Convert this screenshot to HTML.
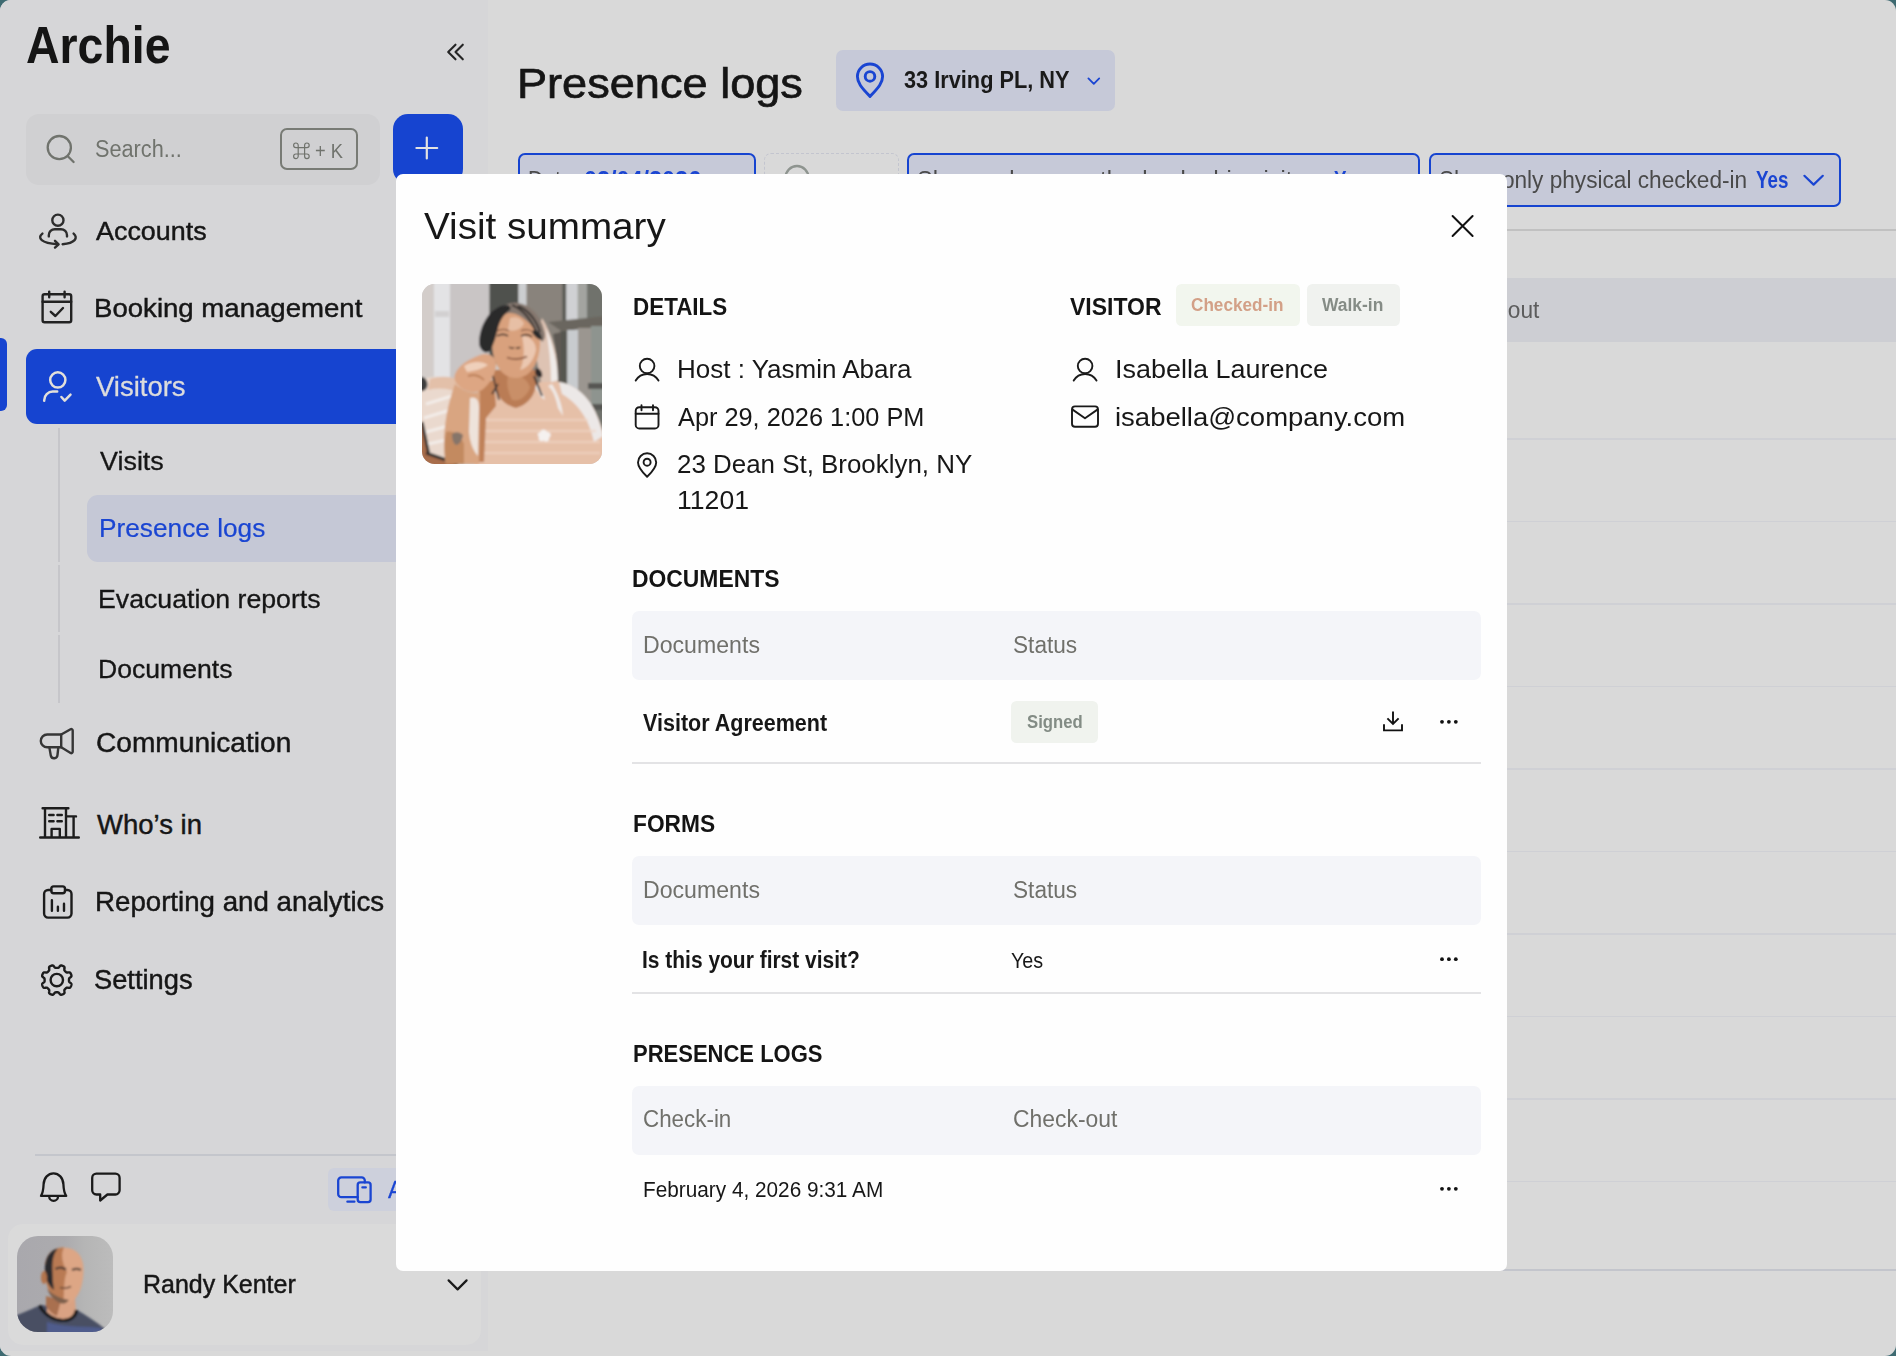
<!DOCTYPE html>
<html lang="en">
<head>
<meta charset="utf-8">
<title>Archie - Presence logs</title>
<style>
html,body{margin:0;padding:0}
body{width:1896px;height:1356px;overflow:hidden;position:relative;background:#3e6a71;font-family:"Liberation Sans",sans-serif}
.b{position:absolute;box-sizing:border-box}
.t{position:absolute;white-space:nowrap;line-height:1;font-family:"Liberation Sans",sans-serif;transform-origin:0 0}
svg.ov{position:absolute;left:0;top:0;width:1896px;height:1356px;overflow:visible}
#win{left:0;top:0;width:1896px;height:1356px;background:#d9d9d9;border-radius:11px;overflow:hidden}
#sidebar{left:0;top:0;width:487.5px;height:1351px;background:#d6d6d8}
#modal{left:396px;top:174px;width:1111px;height:1097px;background:#fefefe;border-radius:7px}
.blue{background:#1644d0}
.chip{background:#c6c9d8;border:2px solid #1644d0;border-radius:7px;top:153px;height:54px}
.th{background:#f4f5f9;border-radius:7px;left:632px;width:849px}
.sep{left:632px;width:849px;height:2px;background:#e3e3e5}
.rl{left:518px;width:1378px;height:1.5px;background:#cfd0d5}
.vl{left:58.4px;width:1.4px;background:#c6c6ca}
.badge{border-radius:5.5px}
</style>
</head>
<body>
<!-- ================= page behind the dialog ================= -->
<div class="b" id="win">
<div class="b" id="sidebar"></div>

<!-- sidebar boxes -->
<div class="b" style="left:26px;top:114px;width:353.5px;height:70.5px;border-radius:13px;background:#d0d0d2"></div>
<div class="b" style="left:280px;top:127.5px;width:78px;height:42.5px;border-radius:7px;border:2.2px solid #787b75"></div>
<div class="b blue" style="left:393px;top:114px;width:69.5px;height:70px;border-radius:15px"></div>
<div class="b blue" style="left:0;top:337.5px;width:6.6px;height:73.5px;border-radius:0 6px 6px 0"></div>
<div class="b blue" style="left:26px;top:348.5px;width:440px;height:75.5px;border-radius:11px"></div>
<div class="b vl" style="top:428px;height:133.5px"></div>
<div class="b vl" style="top:565px;height:66.5px"></div>
<div class="b vl" style="top:635px;height:68px"></div>
<div class="b" style="left:87px;top:495px;width:380px;height:66.5px;border-radius:11px;background:#c5c8d6"></div>
<div class="b" style="left:35px;top:1154.3px;width:445px;height:1.5px;background:#c4c6cc"></div>
<div class="b" style="left:327.5px;top:1168px;width:140px;height:43px;border-radius:6px;background:#cdd0dc"></div>
<div class="b" style="left:7.5px;top:1224px;width:473.5px;height:120.5px;border-radius:15px;background:#dadada"></div>

<!-- main page boxes -->
<div class="b" style="left:836px;top:49.5px;width:279px;height:61px;border-radius:7px;background:#c6c9d8"></div>
<div class="b chip" style="left:518px;width:238px"></div>
<div class="b" style="left:764px;top:153px;width:135px;height:54px;border-radius:7px;border:1.5px dashed #c3c5cf"></div>
<div class="b chip" style="left:906.5px;width:513.5px"></div>
<div class="b chip" style="left:1429px;width:412px"></div>
<div class="b" style="left:518px;top:229px;width:1378px;height:2px;background:#c1c1c1"></div>
<div class="b" style="left:518px;top:278px;width:1378px;height:63.5px;background:#cdced3"></div>
<div class="b rl" style="top:438.3px"></div>
<div class="b rl" style="top:520.8px"></div>
<div class="b rl" style="top:603.3px"></div>
<div class="b rl" style="top:685.8px"></div>
<div class="b rl" style="top:768.3px"></div>
<div class="b rl" style="top:850.8px"></div>
<div class="b rl" style="top:933.3px"></div>
<div class="b rl" style="top:1015.8px"></div>
<div class="b rl" style="top:1098.3px"></div>
<div class="b rl" style="top:1180.8px"></div>
<div class="b rl" style="top:1268.8px;height:2px;background:#c3c5cc"></div>

<svg class="b" style="left:16.5px;top:1235.8px;width:96px;height:96px" viewBox="0 0 96 96">
<defs>
<clipPath id="avc"><rect x="0" y="0" width="96" height="96" rx="21"/></clipPath>
<filter id="avb" x="-5%" y="-5%" width="110%" height="110%"><feGaussianBlur stdDeviation="0.9"/></filter>
<linearGradient id="avbg" x1="0" x2="1" y1="0" y2="0"><stop offset="0" stop-color="#a9a8ad"/><stop offset="0.5" stop-color="#acabae"/><stop offset="0.7" stop-color="#b5b5b5"/><stop offset="1" stop-color="#bcbcbc"/></linearGradient>
</defs>
<g clip-path="url(#avc)">
<rect width="96" height="96" fill="url(#avbg)"/>
<g filter="url(#avb)">
<!-- shirt -->
<path d="M-2 80 C8 76 16 72 24 69 L60 74 C70 80 80 86 88 93 L88 98 L-2 98 Z" fill="#4a4f63"/>
<path d="M30 86 C50 92 70 90 84 92 L88 98 L30 98 Z" fill="#4f5c8c"/>
<!-- neck -->
<path d="M30 62 L58 62 L59 76 C52 86 40 86 30 76 Z" fill="#d9a283"/>
<path d="M29 60 L44 64 L40 80 C35 78 31 74 29 70 Z" fill="#a9704f"/>
<!-- collar -->
<path d="M22.500 69.500 C28 80 38 84.500 46 84.500 C54 84.500 59 80 59.500 74" fill="none" stroke="#141414" stroke-width="3.200"/>
<!-- head -->
<path d="M28 32 C28 18 37 11.500 47 11.500 C59 11.500 66.500 20 66.500 33 C66.500 48 63 58 56 65 C52 68.500 45 68.500 40 65 C32 59 28 48 28 32 Z" fill="#dda685"/>
<!-- shadow side of face -->
<path d="M28 32 C28 18 37 11.500 47 11.500 C43 20 46 28 50 36 C46 44 48 56 46 67 C43 67.500 41 66 40 65 C32 59 28 48 28 32 Z" fill="#b97a53"/>
<!-- jaw / beard shadow -->
<path d="M30 52 C34 58 42 62 52 64 C49 68.500 44 68.500 40 65.500 C35 62 32 58 30 52 Z" fill="#7d5e4c"/>
<!-- hair dark strip -->
<path d="M28 36 C27 22 33 14 41 12.500 C36 18 35 26 35.500 36 C35.500 42 36 48 37 54 C32 50 28.500 44 28 36 Z" fill="#2b2b2e"/>
<!-- ear -->
<ellipse cx="27" cy="41.500" rx="3" ry="6.500" fill="#b3744e"/>
<!-- eyes / brows -->
<path d="M38.500 33 C42 31 46 31.500 49 33.500" stroke="#4a3a34" stroke-width="2.200" fill="none"/>
<path d="M55 34 C58 32.500 61 32.500 64 34" stroke="#5a463c" stroke-width="2" fill="none"/>
<path d="M43 51.500 C46 52.500 50 52.500 54 50.500" stroke="#6a4a3a" stroke-width="1.500" fill="none"/>
</g>
</g>
</svg>

<!-- background text -->
<span class="t" style="left:26.01px;top:19.30px;font-size:52px;color:#151515;font-weight:bold;transform:scaleX(0.8925);">Archie</span>
<span class="t" style="left:95.06px;top:137.65px;font-size:23px;color:#70736d;transform:scaleX(0.9438);">Search...</span>
<span class="t" style="left:315.09px;top:141.40px;font-size:20px;color:#70736d;transform:scaleX(0.9138);">+ K</span>
<span class="t" style="left:95.80px;top:217.78px;font-size:26.5px;color:#161616;-webkit-text-stroke:0.45px #161616;transform:scaleX(1.0148);">Accounts</span>
<span class="t" style="left:93.92px;top:295.38px;font-size:26.5px;color:#161616;-webkit-text-stroke:0.45px #161616;transform:scaleX(1.0410);">Booking management</span>
<span class="t" style="left:95.80px;top:373.62px;font-size:26.8px;color:#dcdcdc;-webkit-text-stroke:0.3px #dcdcdc;transform:scaleX(1.0253);">Visitors</span>
<span class="t" style="left:100.00px;top:449.15px;font-size:25px;color:#161616;-webkit-text-stroke:0.3px #161616;transform:scaleX(1.0763);">Visits</span>
<span class="t" style="left:98.50px;top:516.45px;font-size:25px;color:#1a45d2;-webkit-text-stroke:0.2px #1a45d2;transform:scaleX(1.0500);">Presence logs</span>
<span class="t" style="left:98.46px;top:587.25px;font-size:25px;color:#161616;-webkit-text-stroke:0.3px #161616;transform:scaleX(1.0680);">Evacuation reports</span>
<span class="t" style="left:98.47px;top:657.25px;font-size:25px;color:#161616;-webkit-text-stroke:0.3px #161616;transform:scaleX(1.0637);">Documents</span>
<span class="t" style="left:95.86px;top:730.45px;font-size:27px;color:#161616;-webkit-text-stroke:0.45px #161616;transform:scaleX(1.0411);">Communication</span>
<span class="t" style="left:97.00px;top:810.52px;font-size:27.5px;color:#161616;-webkit-text-stroke:0.45px #161616;transform:scaleX(1.0000);">Who’s in</span>
<span class="t" style="left:95.07px;top:887.99px;font-size:27.3px;color:#161616;-webkit-text-stroke:0.45px #161616;transform:scaleX(1.0138);">Reporting and analytics</span>
<span class="t" style="left:94.31px;top:966.02px;font-size:27.5px;color:#161616;-webkit-text-stroke:0.45px #161616;transform:scaleX(0.9918);">Settings</span>
<span class="t" style="left:388.00px;top:1178.00px;font-size:24px;color:#1a45d2;-webkit-text-stroke:0.3px #1a45d2;transform:scaleX(0.9552);">Admin</span>
<span class="t" style="left:142.75px;top:1271.95px;font-size:25px;color:#161616;-webkit-text-stroke:0.45px #161616;transform:scaleX(0.9990);">Randy Kenter</span>
<span class="t" style="left:517.35px;top:61.95px;font-size:43px;color:#151515;-webkit-text-stroke:0.7px #151515;transform:scaleX(1.0493);">Presence logs</span>
<span class="t" style="left:903.85px;top:68.85px;font-size:23px;color:#1a1a1a;font-weight:bold;transform:scaleX(0.9454);">33 Irving PL, NY</span>
<span class="t" style="left:528.16px;top:169.35px;font-size:23px;color:#4a4a4a;transform:scaleX(0.9216);">Date:</span>
<span class="t" style="left:583.98px;top:169.35px;font-size:23px;color:#1a45d2;font-weight:bold;transform:scaleX(1.0177);">02/04/2026</span>
<span class="t" style="left:916.97px;top:169.35px;font-size:23px;color:#4a4a4a;transform:scaleX(1.0304);">Show only currently checked-in visitors</span>
<span class="t" style="left:1334.18px;top:169.35px;font-size:23px;color:#1a45d2;font-weight:bold;transform:scaleX(0.8158);">Yes</span>
<span class="t" style="left:1439.02px;top:169.35px;font-size:23px;color:#4a4a4a;transform:scaleX(0.9839);">Show only physical checked-in</span>
<span class="t" style="left:1756.18px;top:169.35px;font-size:23px;color:#1a45d2;font-weight:bold;transform:scaleX(0.8158);">Yes</span>
<span class="t" style="left:1436.01px;top:299.45px;font-size:23px;color:#5c5c5c;transform:scaleX(0.9865);">Check-out</span>

<!-- background icons -->
<svg class="ov" viewBox="0 0 1896 1356" fill="none" stroke-linecap="round" stroke-linejoin="round">
<!-- collapse chevrons -->
<g stroke="#252525" stroke-width="2.1">
<path d="M455.5 44.7 L448.2 52 L455.5 59.3"/><path d="M462.8 44.7 L455.5 52 L462.8 59.3"/>
</g>
<!-- search icon -->
<g stroke="#70736d" stroke-width="2.3">
<circle cx="59.3" cy="147.6" r="11.6"/><path d="M67.8 156.2 L73.6 162"/>
</g>
<!-- command key glyph -->
<g stroke="#70736d" stroke-width="1.2" stroke-linecap="butt">
<path d="M298.200 147.600 h6.400 v6.400 h-6.400 z"/>
<path d="M298.200 147.600 h-2.300 a2.300 2.300 0 1 1 2.300 -2.300 z M304.600 147.600 v-2.300 a2.300 2.300 0 1 1 2.300 2.300 z M304.600 154 h2.300 a2.300 2.300 0 1 1 -2.300 2.300 z M298.200 154 v2.300 a2.300 2.300 0 1 1 -2.300 -2.300 z"/>
</g>
<!-- plus -->
<g stroke="#e2e2e2" stroke-width="2.2"><path d="M416.4 148 h20.8 M426.8 137.6 v20.8"/></g>
<!-- accounts -->
<g stroke="#2d2d2d" stroke-width="2.4">
<circle cx="57.9" cy="220.2" r="5.6"/>
<path d="M48.8 236.4 v-1.2 a6 6 0 0 1 6 -6 h6.2 a6 6 0 0 1 6 6 v1.2"/>
<path d="M42.4 233.6 C37 238 41 243.2 57.6 244.3"/>
<path d="M73.6 233.6 C78.5 238 75 243 62.6 244.2"/>
<path d="M55 240.8 L58.6 244.3 L55 247.6"/>
</g>
<!-- booking -->
<g stroke="#222" stroke-width="2.4">
<rect x="42.6" y="294.3" width="28.6" height="28" rx="2"/>
<path d="M42.6 301.8 h28.6 M49.2 291.6 v5.6 M64.6 291.6 v5.6"/>
<path d="M50.8 311.8 L55.4 316 L63 308"/>
</g>
<!-- visitors (active) -->
<g stroke="#e3e0da" stroke-width="2.5">
<circle cx="57.8" cy="379.9" r="7.6"/>
<path d="M44.2 400.8 v-0.6 a8.6 8.6 0 0 1 8.6 -8.6 h4.4"/>
<path d="M61.4 397 L64.7 400.6 L70.5 394.6"/>
</g>
<!-- communication -->
<g stroke="#363636" stroke-width="2.4">
<path d="M61.2 734.5 h-14 a6.4 6.4 0 0 0 0 12.8 h14 z"/>
<path d="M61.2 734.5 L70.6 729.2 a1.4 1.4 0 0 1 2.1 1.2 v21.4 a1.4 1.4 0 0 1 -2.1 1.2 L61.2 747.3"/>
<path d="M49.4 747.6 l1.4 8 a3.4 3.4 0 0 0 6.7 -0.6 l0.8 -7.4"/>
</g>
<!-- who's in -->
<g stroke="#1c1c1c" stroke-width="2.4" stroke-linecap="butt">
<path d="M42.6 808.3 h25.8 M45 808.3 v29.2 M66 808.3 v29.2 M66 816.4 h10 M73.6 816.4 v21 M40.2 837.5 h38.6" stroke-linecap="round"/>
<path d="M49.2 815 h4.4 M57.4 815 h4.4 M49.2 821.3 h4.4 M57.4 821.3 h4.4" stroke-linecap="round"/>
<path d="M51.6 837.5 v-8.6 h8.2 v8.6"/>
</g>
<!-- reporting -->
<g stroke="#1c1c1c" stroke-width="2.4">
<path d="M51.3 890 h-3.2 a4 4 0 0 0 -4 4 v19.6 a4 4 0 0 0 4 4 h19.4 a4 4 0 0 0 4 -4 v-19.6 a4 4 0 0 0 -4 -4 h-2.5"/>
<rect x="51.3" y="886.4" width="13.7" height="6.8" rx="2.4"/>
<path d="M51.9 900.2 v10.6 M57.9 906.8 v4 M64 903.8 v7"/>
</g>
<!-- settings gear -->
<g stroke="#1c1c1c" stroke-width="2.4">
<circle cx="56.8" cy="980.1" r="6.2"/>
<path d="M71.03 985.99 L70.92 986.24 L70.81 986.48 L70.68 986.72 L70.55 986.95 L70.40 987.18 L70.22 987.39 L70.01 987.58 L69.74 987.73 L69.39 987.82 L68.94 987.84 L68.41 987.79 L67.87 987.71 L67.38 987.65 L67.00 987.65 L66.71 987.70 L66.48 987.80 L66.29 987.92 L66.12 988.06 L65.96 988.20 L65.80 988.35 L65.65 988.50 L65.50 988.65 L65.35 988.80 L65.20 988.95 L65.05 989.10 L64.90 989.26 L64.76 989.42 L64.62 989.59 L64.50 989.78 L64.40 990.01 L64.35 990.30 L64.35 990.68 L64.41 991.17 L64.49 991.71 L64.54 992.24 L64.52 992.69 L64.43 993.04 L64.28 993.31 L64.09 993.52 L63.88 993.70 L63.65 993.85 L63.42 993.98 L63.18 994.11 L62.94 994.22 L62.69 994.33 L62.44 994.43 L62.19 994.52 L61.93 994.60 L61.67 994.67 L61.41 994.72 L61.14 994.75 L60.86 994.73 L60.56 994.65 L60.25 994.46 L59.92 994.16 L59.58 993.75 L59.25 993.30 L58.95 992.92 L58.68 992.65 L58.43 992.48 L58.20 992.39 L57.98 992.34 L57.76 992.31 L57.55 992.30 L57.33 992.30 L57.12 992.30 L56.91 992.30 L56.69 992.30 L56.48 992.30 L56.27 992.30 L56.05 992.30 L55.84 992.31 L55.62 992.34 L55.40 992.39 L55.17 992.48 L54.92 992.65 L54.65 992.92 L54.35 993.30 L54.02 993.75 L53.68 994.16 L53.35 994.46 L53.04 994.65 L52.74 994.73 L52.46 994.75 L52.19 994.72 L51.93 994.67 L51.67 994.60 L51.41 994.52 L51.16 994.43 L50.91 994.33 L50.66 994.22 L50.42 994.11 L50.18 993.98 L49.95 993.85 L49.72 993.70 L49.51 993.52 L49.32 993.31 L49.17 993.04 L49.08 992.69 L49.06 992.24 L49.11 991.71 L49.19 991.17 L49.25 990.68 L49.25 990.30 L49.20 990.01 L49.10 989.78 L48.98 989.59 L48.84 989.42 L48.70 989.26 L48.55 989.10 L48.40 988.95 L48.25 988.80 L48.10 988.65 L47.95 988.50 L47.80 988.35 L47.64 988.20 L47.48 988.06 L47.31 987.92 L47.12 987.80 L46.89 987.70 L46.60 987.65 L46.22 987.65 L45.73 987.71 L45.19 987.79 L44.66 987.84 L44.21 987.82 L43.86 987.73 L43.59 987.58 L43.38 987.39 L43.20 987.18 L43.05 986.95 L42.92 986.72 L42.79 986.48 L42.68 986.24 L42.57 985.99 L42.47 985.74 L42.38 985.49 L42.30 985.23 L42.23 984.97 L42.18 984.71 L42.15 984.44 L42.17 984.16 L42.25 983.86 L42.44 983.55 L42.74 983.22 L43.15 982.88 L43.60 982.55 L43.98 982.25 L44.25 981.98 L44.42 981.73 L44.51 981.50 L44.56 981.28 L44.59 981.06 L44.60 980.85 L44.60 980.63 L44.60 980.42 L44.60 980.21 L44.60 979.99 L44.60 979.78 L44.60 979.57 L44.60 979.35 L44.59 979.14 L44.56 978.92 L44.51 978.70 L44.42 978.47 L44.25 978.22 L43.98 977.95 L43.60 977.65 L43.15 977.32 L42.74 976.98 L42.44 976.65 L42.25 976.34 L42.17 976.04 L42.15 975.76 L42.18 975.49 L42.23 975.23 L42.30 974.97 L42.38 974.71 L42.47 974.46 L42.57 974.21 L42.68 973.96 L42.79 973.72 L42.92 973.48 L43.05 973.25 L43.20 973.02 L43.38 972.81 L43.59 972.62 L43.86 972.47 L44.21 972.38 L44.66 972.36 L45.19 972.41 L45.73 972.49 L46.22 972.55 L46.60 972.55 L46.89 972.50 L47.12 972.40 L47.31 972.28 L47.48 972.14 L47.64 972.00 L47.80 971.85 L47.95 971.70 L48.10 971.55 L48.25 971.40 L48.40 971.25 L48.55 971.10 L48.70 970.94 L48.84 970.78 L48.98 970.61 L49.10 970.42 L49.20 970.19 L49.25 969.90 L49.25 969.52 L49.19 969.03 L49.11 968.49 L49.06 967.96 L49.08 967.51 L49.17 967.16 L49.32 966.89 L49.51 966.68 L49.72 966.50 L49.95 966.35 L50.18 966.22 L50.42 966.09 L50.66 965.98 L50.91 965.87 L51.16 965.77 L51.41 965.68 L51.67 965.60 L51.93 965.53 L52.19 965.48 L52.46 965.45 L52.74 965.47 L53.04 965.55 L53.35 965.74 L53.68 966.04 L54.02 966.45 L54.35 966.90 L54.65 967.28 L54.92 967.55 L55.17 967.72 L55.40 967.81 L55.62 967.86 L55.84 967.89 L56.05 967.90 L56.27 967.90 L56.48 967.90 L56.69 967.90 L56.91 967.90 L57.12 967.90 L57.33 967.90 L57.55 967.90 L57.76 967.89 L57.98 967.86 L58.20 967.81 L58.43 967.72 L58.68 967.55 L58.95 967.28 L59.25 966.90 L59.58 966.45 L59.92 966.04 L60.25 965.74 L60.56 965.55 L60.86 965.47 L61.14 965.45 L61.41 965.48 L61.67 965.53 L61.93 965.60 L62.19 965.68 L62.44 965.77 L62.69 965.87 L62.94 965.98 L63.18 966.09 L63.42 966.22 L63.65 966.35 L63.88 966.50 L64.09 966.68 L64.28 966.89 L64.43 967.16 L64.52 967.51 L64.54 967.96 L64.49 968.49 L64.41 969.03 L64.35 969.52 L64.35 969.90 L64.40 970.19 L64.50 970.42 L64.62 970.61 L64.76 970.78 L64.90 970.94 L65.05 971.10 L65.20 971.25 L65.35 971.40 L65.50 971.55 L65.65 971.70 L65.80 971.85 L65.96 972.00 L66.12 972.14 L66.29 972.28 L66.48 972.40 L66.71 972.50 L67.00 972.55 L67.38 972.55 L67.87 972.49 L68.41 972.41 L68.94 972.36 L69.39 972.38 L69.74 972.47 L70.01 972.62 L70.22 972.81 L70.40 973.02 L70.55 973.25 L70.68 973.48 L70.81 973.72 L70.92 973.96 L71.03 974.21 L71.13 974.46 L71.22 974.71 L71.30 974.97 L71.37 975.23 L71.42 975.49 L71.45 975.76 L71.43 976.04 L71.35 976.34 L71.16 976.65 L70.86 976.98 L70.45 977.32 L70.00 977.65 L69.62 977.95 L69.35 978.22 L69.18 978.47 L69.09 978.70 L69.04 978.92 L69.01 979.14 L69.00 979.35 L69.00 979.57 L69.00 979.78 L69.00 979.99 L69.00 980.21 L69.00 980.42 L69.00 980.63 L69.00 980.85 L69.01 981.06 L69.04 981.28 L69.09 981.50 L69.18 981.73 L69.35 981.98 L69.62 982.25 L70.00 982.55 L70.45 982.88 L70.86 983.22 L71.16 983.55 L71.35 983.86 L71.43 984.16 L71.45 984.44 L71.42 984.71 L71.37 984.97 L71.30 985.23 L71.22 985.49 L71.13 985.74 L71.03 985.99 Z"/>
</g>
<!-- bell -->
<g stroke="#1a1a1a" stroke-width="2.3">
<path d="M41 1195.9 h25.2 c-2.2 -3 -2.6 -7 -2.8 -11.6 c-0.3 -6.6 -4.6 -10.9 -9.9 -10.9 s-9.6 4.3 -9.9 10.9 c-0.2 4.6 -0.6 8.600 -2.600 11.6 z"/>
<path d="M49.2 1196.4 a4.4 4.4 0 0 0 8.800 0"/>
</g>
<!-- chat -->
<g stroke="#1a1a1a" stroke-width="2.3">
<path d="M96.400 1173.700 h19 a4.200 4.200 0 0 1 4.200 4.200 v12.400 a4.200 4.200 0 0 1 -4.200 4.200 h-8 l-7.200 6 v-6 h-3.800 a4.200 4.200 0 0 1 -4.200 -4.200 v-12.400 a4.200 4.200 0 0 1 4.200 -4.200 z"/>
</g>
<!-- devices -->
<g stroke="#1a45d2" stroke-width="2.3">
<path d="M357.7 1197.200 h-16.300 a3.200 3.200 0 0 1 -3.200 -3.200 v-13.400 a3.200 3.200 0 0 1 3.200 -3.200 h20.200 a3.200 3.200 0 0 1 3.200 3.200 v1.800"/>
<rect x="357.7" y="1182.4" width="12.9" height="19.8" rx="2.6"/>
<path d="M347.4 1201.700 h7 M362.400 1187.400 h3.400"/>
</g>
<!-- chevron (user card) -->
<g stroke="#1a1a1a" stroke-width="2.2"><path d="M448.6 1280.400 L457.600 1289.400 L466.600 1280.400"/></g>
<!-- header pin -->
<g stroke="#1a45d2" stroke-width="2.9">
<path d="M870 96.400 C861 87.400 857.400 82.400 857.400 76.600 a12.600 12.600 0 0 1 25.200 0 c0 5.800 -3.600 10.800 -12.600 19.800 z"/>
<circle cx="870" cy="76.400" r="4.800"/>
</g>
<g stroke="#1a45d2" stroke-width="1.800"><path d="M1088.400 78.400 L1093.800 83.800 L1099.200 78.400"/></g>
<!-- dashed chip search icon -->
<g stroke="#8e948f" stroke-width="2.3"><circle cx="797" cy="177.400" r="11.400"/></g>
<!-- chip 4 chevron -->
<g stroke="#1a45d2" stroke-width="2.2"><path d="M1804.400 175.800 L1813.600 184.600 L1822.800 175.800"/></g>

</svg>

<!-- ================= Visit summary dialog ================= -->
<div class="b" id="modal"></div>
<div class="b th" style="top:611px;height:68.5px"></div>
<div class="b sep" style="top:762px"></div>
<div class="b th" style="top:856px;height:68.5px"></div>
<div class="b sep" style="top:992px"></div>
<div class="b th" style="top:1086px;height:68.5px"></div>
<div class="b badge" style="left:1176px;top:284px;width:123.5px;height:41.5px;background:#f2f6ee"></div>
<div class="b badge" style="left:1307px;top:284px;width:93px;height:41.5px;background:#f0f2ef"></div>
<div class="b badge" style="left:1011px;top:701px;width:87px;height:42px;background:#f0f3ee"></div>

<svg class="b" style="left:422px;top:283.500px;width:180px;height:180px" viewBox="0 0 180 180">
<defs>
<clipPath id="phc"><rect x="0" y="0" width="180" height="180" rx="12.500"/></clipPath>
<filter id="phb" x="-5%" y="-5%" width="110%" height="110%"><feGaussianBlur stdDeviation="1.100"/></filter>
</defs>
<g clip-path="url(#phc)">
<rect width="180" height="180" fill="#cfcbca"/>
<g filter="url(#phb)">
<!-- wall -->
<rect x="-4" y="-4" width="16" height="104" fill="#d3cdca"/>
<rect x="12" y="-4" width="16" height="104" fill="#e3e3e5"/>
<rect x="13" y="27" width="14" height="6" fill="#d2d0d1"/>
<rect x="28" y="-4" width="39.500" height="104" fill="#c9c5c5"/>
<!-- window region -->
<rect x="67.400" y="-4" width="29" height="84" fill="#4f514d"/>
<rect x="96.800" y="-4" width="8" height="40" fill="#ccced0"/>
<rect x="104.500" y="-4" width="37" height="112" fill="#89837c"/>
<rect x="140.500" y="-4" width="4" height="112" fill="#595853"/>
<rect x="144.300" y="-4" width="11.500" height="112" fill="#d0d1d4"/>
<rect x="155.700" y="-4" width="9.500" height="150" fill="#a3a4a0"/>
<rect x="165" y="-4" width="19" height="150" fill="#70726c"/>
<path d="M126 38 L184 32 L184 41.500 L140 47.500 Z" fill="#6b665f"/>
<rect x="138.500" y="47" width="7" height="64" fill="#575650"/>
<rect x="145.300" y="46" width="10.700" height="66" fill="#c8cbce"/>
<rect x="156" y="44" width="13" height="80" fill="#9b9690"/>
<rect x="169" y="42" width="15" height="82" fill="#8e948f"/>
<rect x="166" y="99" width="18" height="6" fill="#565752"/>
<rect x="166" y="120" width="18" height="6" fill="#565752"/>
<!-- pillow -->
<path d="M-2 96 C10 91 26 92 40 97 L44 172 L-2 174 Z" fill="#ead9ce"/>
<path d="M8 95 C20 91 32 93 42 98 L40 110 C30 105 18 103 6 106 Z" fill="#e3c0a9"/>
<path d="M4 120 L30 112 M2 134 L28 126 M4 148 L26 142 M6 160 L24 156" stroke="#f3ece8" stroke-width="3" fill="none"/>
<path d="M-2 93 C2 92 5.500 96 5.500 100.500 C5.500 105 2 108 -2 107 Z" fill="#3e3e3e"/>
<!-- chair bottom-left -->
<path d="M-2 136 L6 170 L34 178 L34 184 L-2 184 Z" fill="#a86d4b"/>
<path d="M0 138 L7 171 M4 169 L36 180" stroke="#35302f" stroke-width="3" fill="none"/>
<!-- hood / light hair right -->
<path d="M120 34 C130 50 136 72 138 100 L120 104 L112 60 Z" fill="#dec3b3"/>
<path d="M124 44 C131 60 135 78 136.500 96 L129 98 C129 80 127 62 124 44 Z" fill="#f0ebe9"/>
<path d="M131 50 L139 48 L139 100 L136 100 C136 82 134 66 131 50 Z" fill="#5d5852"/>
<!-- shirt -->
<path d="M56 100 L62 108 L93 112 L118 98 L137 98 C150 100 161 108 169 120 C176 131 181 146 184 160 L184 184 L52 184 Z" fill="#e6c0a8"/>
<path d="M137 98 C150 100 161 108 169 120 C175 130 179 142 181 152 L172 158 C168 140 160 122 140 110 Z" fill="#ece8e7"/>
<path d="M114 100 C118 104 122 110 123 116 L118 112 C117 108 114 104 110 102 Z M130 100 C136 110 140 120 141 132 L136 124 C134 114 131 106 126 102 Z" fill="#efe9e6"/>
<path d="M64 136 L166 136 M60 147 L174 147 M58 158 L178 158 M58 169 L178 169" stroke="#efd6c5" stroke-width="2.600" fill="none" opacity="0.650"/>
<path d="M118 148.500 c1 -4 6 -4 7 -0.500 c4 -0.500 5 4 2 6 c1 3 -3 5 -5.500 2.500 c-3 2 -6 -1 -4.500 -4 c-2.500 -1.500 -1 -4.500 1 -4 z" fill="#f5f1ef"/>
<!-- neck / chest -->
<path d="M70 86 L114 86 C116 104 112 118 94 124 C78 120 70 106 70 86 Z" fill="#ba7c54"/>
<path d="M86 92 C96 90 106 94 108 104 C104 114 96 118 90 116 C86 108 84 100 86 92 Z" fill="#c98f68"/>
<!-- shadow between arm and chest -->
<path d="M57 100 L72 96 L74 122 L64 134 L62 178 L54 178 Z" fill="#c08158"/>
<!-- face -->
<path d="M70 58 C70 40 80 27 94 27 C109 27 119 40 118 60 C117 80 108 94 94 94 C80 94 70 80 70 58 Z" fill="#d9a17d"/>
<path d="M100 52 C108 52 114 58 114 66 C112 76 106 84 98 86 C102 78 103 66 100 52 Z" fill="#ebc7b0"/>
<path d="M88 34 C94 32 100 34 102 40 C98 46 92 48 86 46 Z" fill="#e7bfa5"/>
<path d="M75 52 C79 50 83 50 86 52 M99 52 C103 50 107 50 110 53" stroke="#3f302a" stroke-width="1.700" fill="none"/>
<path d="M75 47 C79 45 84 45 87 47 M99 47 C103 45 108 45.500 111 48" stroke="#8a5e46" stroke-width="1.300" fill="none"/>
<path d="M85 73.500 C91 75.500 99 75.500 105 72.500" stroke="#8a5840" stroke-width="1.800" fill="none"/>
<path d="M87 63 C89 64.500 91 64.500 92 63.500 M94 63.500 C95 64.500 97 64.500 98 63" stroke="#4a3228" stroke-width="1.500" fill="none"/>
<!-- hair: grey-brown top/right sweep -->
<path d="M78 26 C82 20 90 18 96 19 C108 21 118 30 122 46 C124 52 123 56 120 58 C116 48 108 38 98 32 C92 28 84 28 78 32 Z" fill="#86786f"/>
<path d="M96 22 C106 26 114 36 118 48 M90 21 C102 26 110 38 114 48" stroke="#3a3432" stroke-width="2" fill="none"/>
<path d="M112 46 C116 46 120 50 120 56 C116 56 112 52 110 48 Z" fill="#2b2a2c"/>
<!-- hair: dark left band -->
<path d="M79 22 C86 20 90 22 88 26 C82 30 78 36 76 44 C74 52 72 60 68 67 C64 70 60 68 57.500 62 C56 52 60 40 66 32 C70 27 74 24 79 22 Z" fill="#2b2a2c"/>
<!-- earring / dark bits right of neck -->
<path d="M114 84 C118 84 121 88 120 93 C117 94 113 92 113 88 Z" fill="#2f2c2c"/>
<path d="M112 92 L120 112" stroke="#3a3230" stroke-width="2" fill="none"/>
<!-- hand -->
<path d="M33 90 C37 80 48 75 58 71 C66 68 74 72 74 80 C74 90 68 100 60 106 C52 110 42 108 36 101 C32 97 32 93 33 90 Z" fill="#dda683"/>
<path d="M42 82 C50 77 60 77 66 81 C60 85 52 87 45 88 Z" fill="#efd0bb"/>
<path d="M46 92 C52 90 58 92 62 96" stroke="#b87a52" stroke-width="1.600" fill="none"/>
<path d="M71 92 L77 116 M76 100 L70 110" stroke="#3a3230" stroke-width="1.500" fill="none"/>
<!-- forearm -->
<path d="M33 100 C42 108 52 110 58 108 L57 180 L24 180 C20 160 22 130 33 100 Z" fill="#d9a581"/>
<path d="M24 148 C30 146 38 150 42 160 L42 180 L24 180 C22 170 22 158 24 148 Z" fill="#c38a61"/>
<path d="M48 114 C54 112 57 116 57 124 L56 172 C52 168 48 160 47 148 Z" fill="#eee3db"/>
<path d="M30 150 C34 147 38 148 41 151 C40 157 37 161 34 161 C31 159 30 155 30 150 Z" fill="#867569"/>
</g>
</g>
</svg>

<span class="t" style="left:423.50px;top:207.72px;font-size:37.5px;color:#171717;transform:scaleX(1.0298);">Visit summary</span>
<span class="t" style="left:632.93px;top:294.50px;font-size:24px;color:#141414;font-weight:bold;transform:scaleX(0.9337);">DETAILS</span>
<span class="t" style="left:1070.00px;top:294.50px;font-size:24px;color:#141414;font-weight:bold;transform:scaleX(0.9579);">VISITOR</span>
<span class="t" style="left:1191.05px;top:295.60px;font-size:18px;color:#d3a087;font-weight:bold;transform:scaleX(0.9526);">Checked-in</span>
<span class="t" style="left:1322.00px;top:295.60px;font-size:18px;color:#858c86;font-weight:bold;transform:scaleX(0.9677);">Walk-in</span>
<span class="t" style="left:677.40px;top:356.30px;font-size:26px;color:#171717;transform:scaleX(0.9996);">Host : Yasmin Abara</span>
<span class="t" style="left:678.00px;top:403.80px;font-size:26px;color:#171717;transform:scaleX(0.9741);">Apr 29, 2026 1:00 PM</span>
<span class="t" style="left:677.00px;top:451.30px;font-size:26px;color:#171717;transform:scaleX(0.9966);">23 Dean St, Brooklyn, NY</span>
<span class="t" style="left:677.46px;top:487.30px;font-size:26px;color:#171717;transform:scaleX(1.0224);">11201</span>
<span class="t" style="left:1114.93px;top:356.30px;font-size:26px;color:#171717;transform:scaleX(1.0371);">Isabella Laurence</span>
<span class="t" style="left:1114.89px;top:403.80px;font-size:26px;color:#171717;transform:scaleX(1.0572);">isabella@company.com</span>
<span class="t" style="left:632.49px;top:566.75px;font-size:24px;color:#141414;font-weight:bold;transform:scaleX(0.9533);">DOCUMENTS</span>
<span class="t" style="left:642.69px;top:633.85px;font-size:23px;color:#70706b;transform:scaleX(1.0053);">Documents</span>
<span class="t" style="left:1012.77px;top:633.85px;font-size:23px;color:#70706b;transform:scaleX(0.9844);">Status</span>
<span class="t" style="left:642.50px;top:711.85px;font-size:23px;color:#171717;font-weight:bold;transform:scaleX(0.9353);">Visitor Agreement</span>
<span class="t" style="left:1026.57px;top:712.60px;font-size:18px;color:#838c85;font-weight:bold;transform:scaleX(0.9276);">Signed</span>
<span class="t" style="left:632.50px;top:811.75px;font-size:24px;color:#141414;font-weight:bold;transform:scaleX(0.9476);">FORMS</span>
<span class="t" style="left:642.69px;top:878.85px;font-size:23px;color:#70706b;transform:scaleX(1.0053);">Documents</span>
<span class="t" style="left:1012.77px;top:878.85px;font-size:23px;color:#70706b;transform:scaleX(0.9844);">Status</span>
<span class="t" style="left:642.09px;top:948.85px;font-size:23px;color:#171717;font-weight:bold;transform:scaleX(0.9114);">Is this your first visit?</span>
<span class="t" style="left:1011.10px;top:949.70px;font-size:22px;color:#171717;transform:scaleX(0.8971);">Yes</span>
<span class="t" style="left:632.67px;top:1041.75px;font-size:24px;color:#141414;font-weight:bold;transform:scaleX(0.9167);">PRESENCE LOGS</span>
<span class="t" style="left:643.23px;top:1108.35px;font-size:23px;color:#70706b;transform:scaleX(0.9730);">Check-in</span>
<span class="t" style="left:1012.50px;top:1108.35px;font-size:23px;color:#70706b;transform:scaleX(0.9952);">Check-out</span>
<span class="t" style="left:643.11px;top:1179.10px;font-size:22px;color:#171717;transform:scaleX(0.9442);">February 4, 2026 9:31 AM</span>

<svg class="ov" viewBox="0 0 1896 1356" fill="none" stroke-linecap="round" stroke-linejoin="round">
<!-- close -->
<g stroke="#111" stroke-width="2"><path d="M1452.600 216 L1472.600 236 M1472.600 216 L1452.600 236"/></g>
<!-- host person -->
<g stroke="#1a1a1a" stroke-width="1.9">
<circle cx="647.1" cy="366" r="7.300"/>
<path d="M635.700 380.600 C638.400 376 642.400 374 647.100 374 s8.700 2 11.400 6.600"/>
</g>
<!-- calendar -->
<g stroke="#1a1a1a" stroke-width="1.9">
<rect x="635.700" y="407.200" width="22.800" height="21.300" rx="3.600"/>
<path d="M635.700 413.700 h22.800 M641.500 405.200 v5 M653 405.200 v5"/>
</g>
<!-- pin -->
<g stroke="#1a1a1a" stroke-width="1.9">
<path d="M647.100 476.800 C640.400 470.200 638 466.600 638 462.400 a9.100 9.100 0 0 1 18.200 0 c0 4.200 -2.400 7.800 -9.100 14.400 z"/>
<circle cx="647.100" cy="462.200" r="3.500"/>
</g>
<!-- visitor person -->
<g stroke="#1a1a1a" stroke-width="1.9">
<circle cx="1085.100" cy="366" r="7.300"/>
<path d="M1073.700 380.600 C1076.400 376 1080.400 374 1085.100 374 s8.700 2 11.400 6.600"/>
</g>
<!-- mail -->
<g stroke="#1a1a1a" stroke-width="1.9">
<rect x="1072" y="406.400" width="26" height="20.400" rx="3"/>
<path d="M1072.600 409.600 L1085 418.200 L1097.400 409.600"/>
</g>
<!-- download -->
<g stroke="#111" stroke-width="1.9" stroke-linecap="butt" stroke-linejoin="miter">
<path d="M1393 711.400 v12.400 M1387.400 718.400 L1393 724 L1398.600 718.400"/>
<path d="M1384 724.200 v6.200 h18 v-6.200"/>
</g>
<!-- more dots -->
<g fill="#111" stroke="none">
<circle cx="1442" cy="721.800" r="1.900"/><circle cx="1448.900" cy="721.800" r="1.900"/><circle cx="1455.800" cy="721.800" r="1.900"/>
<circle cx="1442" cy="959.200" r="1.900"/><circle cx="1448.900" cy="959.200" r="1.900"/><circle cx="1455.800" cy="959.200" r="1.900"/>
<circle cx="1442" cy="1188.800" r="1.900"/><circle cx="1448.900" cy="1188.800" r="1.900"/><circle cx="1455.800" cy="1188.800" r="1.900"/>
</g>

</svg>
</div>
</body>
</html>
